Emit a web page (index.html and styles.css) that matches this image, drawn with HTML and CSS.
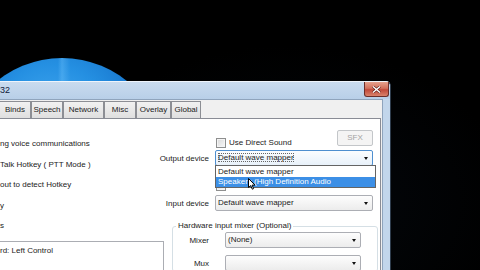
FILE: index.html
```html
<!DOCTYPE html>
<html lang="en">

<head>
  <meta charset="UTF-8">
  <title>Setup</title>
  <link rel="stylesheet" href="styles.css">
</head>

<body>
  <div class="desktop">
    <div class="globe"></div>

    <div class="window">
      <div class="titlebar">
        <span class="title">32</span>
        <div class="close">
          <svg width="9" height="7" viewBox="0 0 9 7">
            <path d="M1 0.5 L8 6.5 M8 0.5 L1 6.5" stroke="#5a1a14" stroke-width="2.6" />
            <path d="M1 0.5 L8 6.5 M8 0.5 L1 6.5" stroke="#fff" stroke-width="1.4" />
          </svg>
        </div>
      </div>

      <div class="client">
        <div class="tabs">
          <span class="tab tab-binds">Binds</span>
          <span class="tab tab-speech">Speech</span>
          <span class="tab tab-network">Network</span>
          <span class="tab tab-misc">Misc</span>
          <span class="tab tab-overlay">Overlay</span>
          <span class="tab tab-global">Global</span>
        </div>

        <div class="page">
          <div class="left-col">
            <div class="opt">ng voice communications</div>
            <div class="opt">Talk Hotkey ( PTT Mode )</div>
            <div class="opt">out to detect Hotkey</div>
            <div class="opt">y</div>
            <div class="opt">s</div>
            <div class="hotkey-box">rd: Left Control</div>
          </div>

          <div class="settings">
            <div class="row row-sfx">
              <span class="label"></span>
              <div class="ctl sfx-line">
                <span class="check"><span class="checkbox"></span>Use Direct Sound</span>
                <span class="btn">SFX</span>
              </div>
            </div>

            <div class="row row-out">
              <span class="label">Output device</span>
              <div class="combo focused">
                <span class="combo-text">Default wave mapper</span>
                <div class="droplist">
                  <div class="item">Default wave mapper</div>
                  <div class="item selected">Speakers (High Definition Audio</div>
                  <svg class="pointer" width="8" height="12" viewBox="0 0 8 12">
                    <path d="M0.5 0.5 L0.5 9.5 L2.7 7.6 L4.3 11.2 L5.6 10.6 L4.1 7.1 L7 7.1 Z" fill="#fff" stroke="#000" stroke-width="1" />
                  </svg>
                </div>
              </div>
            </div>

            <div class="row row-mixed">
              <span class="label"></span>
              <span class="check"><span class="checkbox"></span>Use Mixed Sounds</span>
            </div>

            <div class="row row-in">
              <span class="label">Input device</span>
              <div class="combo"><span class="combo-text">Default wave mapper</span></div>
            </div>

            <fieldset class="group">
              <legend>Hardware input mixer (Optional)</legend>
              <div class="group-row">
                <span class="group-label">Mixer</span>
                <div class="combo small"><span class="combo-text">(None)</span></div>
              </div>
              <div class="group-row row-mux">
                <span class="group-label">Mux</span>
                <div class="combo small"><span class="combo-text"></span></div>
              </div>
            </fieldset>
          </div>
        </div>
      </div>
    </div>
  </div>
</body>

</html>
```

FILE: styles.css
```css
* {
  box-sizing: border-box;
}

body {
  margin: 0;
  padding: 0;
  width: 480px;
  height: 270px;
  overflow: hidden;
  background-color: #000;
  font-family: 'Liberation Sans', Arial, sans-serif;
  font-size: 8px;
  color: #1b1b1b;
}

.desktop {
  position: relative;
  width: 480px;
  height: 270px;
  overflow: hidden;
  background: radial-gradient(ellipse at 60% 75%, #04080d 0%, #000 55%);
}

/* windows logo glow peeking above the dialog */
.globe {
  position: absolute;
  left: -41px;
  top: 58px;
  width: 206px;
  height: 206px;
  border-radius: 50%;
  background:
    linear-gradient(90deg, transparent 48%, rgba(120, 200, 255, 0.35) 50%, transparent 54%),
    radial-gradient(circle at 45% 30%, #48acf2 0%, #2590e2 30%, #1470c8 55%, #0a4c98 80%, #06305f 100%);
}

.window {
  position: absolute;
  left: 0;
  top: 81px;
  width: 391px;
  height: 200px;
  background-color: #c2d6eb;
  border-right: 1px solid #2e3c4c;
  border-top: 1px solid #eef4fb;
  border-top-right-radius: 5px;
  display: flex;
  flex-direction: column;
}

.titlebar {
  height: 18px;
  display: flex;
  align-items: flex-start;
  background: linear-gradient(#c9dbee, #b8cfe8);
  border-top-right-radius: 5px;
}

.title {
  font-size: 9px;
  line-height: 17px;
  color: #10203a;
}

.close {
  margin-left: auto;
  margin-right: 1px;
  width: 25px;
  height: 15px;
  border: 1px solid #6b2e2a;
  border-top: none;
  border-radius: 0 0 3px 3px;
  background: linear-gradient(#e6a18d 0%, #d2705c 45%, #c1493a 55%, #d9826b 100%);
  display: flex;
  align-items: center;
  justify-content: center;
}

.client {
  flex: 1;
  margin-right: 7px;
  background-color: #f0f0f0;
  border-top: 1px solid #8fa4bc;
  border-right: 1px solid #8fa4bc;
  display: flex;
  flex-direction: column;
}

.tabs {
  display: flex;
  height: 17px;
  margin-top: 1px;
}

.tab {
  height: 17px;
  border: 1px solid #8c8e94;
  border-bottom: none;
  background: linear-gradient(#f1f1f1, #dfdfdf);
  display: flex;
  align-items: center;
  justify-content: center;
  line-height: 10px;
}

.tab-binds {
  width: 31px;
  justify-content: flex-end;
  padding-right: 5px;
  border-left: none;
}

.tab-speech {
  width: 32px;
}

.tab-network {
  width: 41px;
}

.tab-misc {
  width: 32px;
}

.tab-overlay {
  width: 35px;
}

.tab-global {
  width: 30px;
}

.page {
  flex: 1;
  margin-right: 1px;
  background-color: #fff;
  border: 1px solid #898c95;
  border-left: none;
  display: flex;
}

.left-col {
  width: 157px;
  padding-top: 15px;
  flex-shrink: 0;
}

.opt {
  height: 20.5px;
  line-height: 20.5px;
  white-space: nowrap;
}

.hotkey-box {
  width: 164px;
  height: 60px;
  margin-top: 4px;
  padding-top: 4px;
  border: 1px solid #abadb3;
  border-left: none;
  line-height: 10px;
  white-space: nowrap;
}

.settings {
  display: flex;
  flex-direction: column;
  width: 216px;
}

.row {
  display: flex;
  align-items: center;
  gap: 6px;
}

.label {
  width: 52px;
  flex-shrink: 0;
  text-align: right;
  white-space: nowrap;
}

.row-sfx {
  margin-top: 11px;
  height: 18px;
  align-items: flex-start;
}

.sfx-line {
  flex: 1;
  display: flex;
  align-items: flex-start;
}

.sfx-line .check {
  margin-top: 8px;
}

.check {
  display: flex;
  align-items: center;
  gap: 3px;
  line-height: 10px;
  white-space: nowrap;
  padding-left: 1px;
}

.checkbox {
  width: 10px;
  height: 10px;
  border: 1px solid #8e8f8f;
  background: linear-gradient(135deg, #d9d9d9, #f8f8f8);
  box-shadow: inset 0 0 0 1px #f4f4f4;
}

.btn {
  margin-left: auto;
  width: 36px;
  height: 16px;
  border: 1px solid #c3c6c9;
  border-radius: 2px;
  background-color: #f4f4f4;
  color: #a3a3a3;
  text-align: center;
  line-height: 14px;
}

.row-out {
  margin-top: 2px;
  position: relative;
  z-index: 2;
}

.row-mixed {
  margin-top: 15px;
  height: 10px;
}

.row-in {
  margin-top: 4px;
}

.combo {
  position: relative;
  width: 158px;
  height: 16px;
  border: 1px solid #acaeb4;
  border-radius: 2px;
  background: linear-gradient(#fdfdfd, #ececec);
  line-height: 14px;
  padding-left: 2px;
  white-space: nowrap;
}

.combo::after {
  content: '';
  position: absolute;
  right: 4px;
  top: 6px;
  border-left: 2.5px solid transparent;
  border-right: 2.5px solid transparent;
  border-top: 3px solid #111;
}

.combo.focused {
  border-color: #4f8fcf;
  background: linear-gradient(#fbfdff, #e8f1fa);
}

.combo.focused .combo-text {
  outline: 1px dotted #666;
  outline-offset: -1px;
}

.combo.small {
  width: 136px;
}

.droplist {
  position: absolute;
  left: -1px;
  top: 14px;
  width: 161px;
  height: 23px;
  border: 1px solid #646464;
  background-color: #fff;
  padding-top: 1px;
}

.droplist .item {
  height: 10px;
  line-height: 10px;
  padding-left: 2px;
}

.droplist .item.selected {
  background-color: #3c8fe6;
  color: #fff;
}

.pointer {
  position: absolute;
  left: 32px;
  top: 12px;
}

.group {
  margin: 10px 0 0 15px;
  width: 206px;
  padding: 1px 0 0 0;
  border: 1px solid #d5dfe5;
  border-radius: 3px;
  min-width: 0;
}

.group legend {
  margin-left: 3px;
  padding: 0 2px;
  line-height: 10px;
}

.group-row {
  display: flex;
  align-items: center;
  gap: 16px;
}

.group-label {
  width: 36px;
  text-align: right;
}

.row-mux {
  margin-top: 7px;
}
```
